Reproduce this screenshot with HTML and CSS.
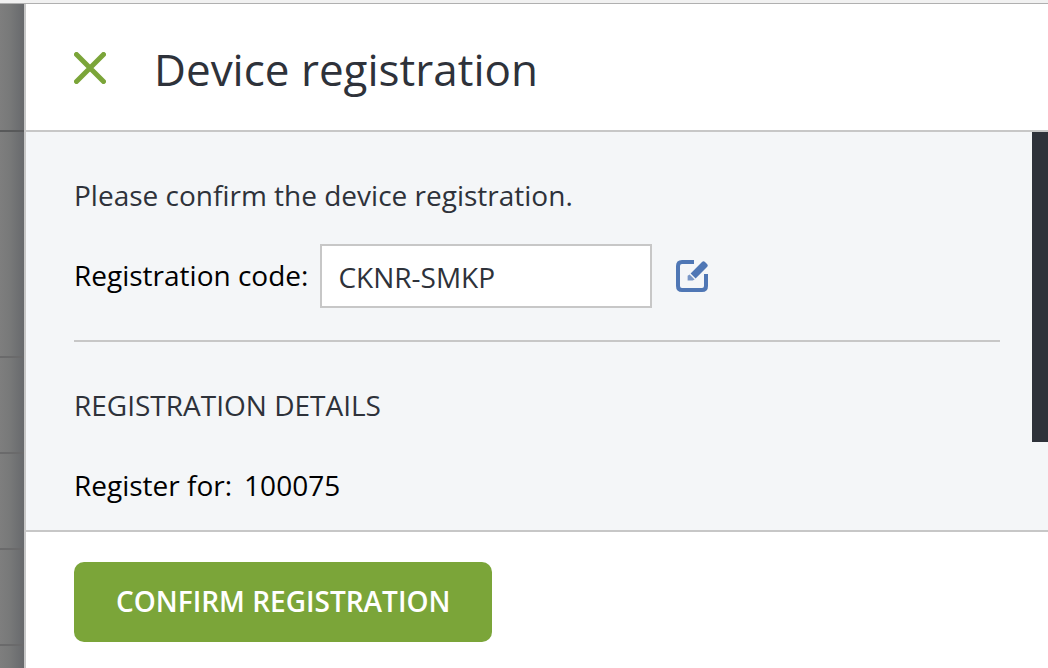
FILE: index.html
```
<!doctype html>
<html lang="en">
    <head>
        <meta charset="utf-8">
        <title>Device registration</title>
        <link rel="stylesheet" href="styles.css">
    </head>
    <body>
        <div class="topbar"></div>
        <div class="page">
            <!-- dimmed list behind the dialog -->
            <div class="backdrop">
                <div class="row row-head"></div>
                <div class="row row-filter"></div>
                <div class="row"></div>
                <div class="row"></div>
                <div class="row"></div>
            </div>

            <form class="dialog">
                <header class="dialog-header">
                    <button type="button" class="icon-btn" aria-label="Close">
                        <svg width="32" height="32" viewBox="0 0 32 32" fill="none" stroke="#7ba539" stroke-width="5" stroke-linecap="round">
                            <path d="M2.5 2.5L29.5 29.5M29.5 2.5L2.5 29.5"/>
                        </svg>
                    </button>
                    <h1>Device registration</h1>
                </header>

                <div class="dialog-body">
                    <div class="content">
                        <p class="intro">Please confirm the device registration.</p>
                        <div class="field">
                            <label for="code">Registration code:</label>
                            <input id="code" type="text" value="CKNR-SMKP">
                            <button type="button" class="icon-btn" aria-label="Edit code">
                                <svg width="32" height="32" viewBox="0 0 32 32">
                                    <path d="M18 2H6Q2 2 2 6V26Q2 30 6 30H26Q30 30 30 26V14" fill="none" stroke="#4f77b5" stroke-width="4"/>
                                    <path d="M14.6 13.4L26 2Q27.5 0.5 29 2L31 4Q32.5 5.5 31 7L19.6 18.4Z" fill="#4f77b5"/>
                                    <path d="M11.6 20.6V15.8L13.6 14.4L18.6 19.4L16.6 20.6Z" fill="#7896c6"/>
                                </svg>
                            </button>
                        </div>
                        <hr>
                        <h2>REGISTRATION DETAILS</h2>
                        <dl class="details">
                            <dt>Register for:</dt>
                            <dd>100075</dd>
                        </dl>
                    </div>
                    <div class="scrollbar"><div class="thumb"></div></div>
                </div>

                <footer class="dialog-footer">
                    <button type="submit" class="btn">CONFIRM REGISTRATION</button>
                </footer>
            </form>
        </div>
    </body>
</html>
```

FILE: styles.css
```
* {
    box-sizing: border-box;
    font-family: "Open Sans", sans-serif;
}

body {
    display: flex;
    flex-direction: column;
    height: 100vh;
    margin: 0;
    overflow: hidden;
    font-size: 28px;
    line-height: 38px;
    color: #2e323a;
}

.topbar {
    flex: none;
    height: 4px;
    background: #f1f1f1;
    border-bottom: 1px solid #b0b0b0;
}

.page {
    display: flex;
    flex: 1;
    min-height: 0;
}

.backdrop {
    flex: none;
    width: 24px;
    overflow: hidden;
    background: linear-gradient(to right, #7e7e7e, #787979 40%, #67696c);
}

.row {
    height: 96px;
    border-bottom: 2px solid #6a6a6b;
}

.row-head {
    height: 128px;
    border-color: #58595a;
}

.row-filter {
    height: 226px;
}

.dialog {
    display: flex;
    flex: 1;
    flex-direction: column;
    min-width: 0;
    background: #fff;
    border-left: 2px solid #c7c7c7;
}

.dialog-header {
    display: flex;
    align-items: center;
    gap: 48px;
    padding: 32px 48px 30px;
    border-bottom: 2px solid #c7c7c7;
}

h1 {
    margin: 0;
    padding-top: 2px;
    font-size: 44px;
    font-weight: 400;
    line-height: 62px;
}

.icon-btn {
    flex: none;
    padding: 0;
    border: 0;
    background: none;
    line-height: 0;
    cursor: pointer;
}

.dialog-body {
    display: flex;
    flex: 1;
    min-height: 0;
    background: #f4f6f8;
}

.content {
    flex: 1;
    padding: 44px 32px 24px 48px;
    overflow: hidden;
}

.intro {
    margin: 0 0 30px;
}

.field {
    display: flex;
    align-items: center;
    color: #000;
}

.field label {
    padding-bottom: 2px;
}

.field input {
    width: 332px;
    height: 64px;
    margin: 0 24px 0 12px;
    padding: 2px 16px 0;
    border: 2px solid #c7c7c7;
    background: #fff;
    color: #2e323a;
    font-size: 28px;
}

hr {
    margin: 32px 0 44px;
    border: 0;
    border-top: 2px solid #c7c7c7;
}

h2 {
    margin: 0 0 42px;
    font-size: 28px;
    font-weight: 400;
}

.details {
    display: flex;
    gap: 12px;
    margin: 0;
    color: #000;
}

.details dd {
    margin: 0;
}

.scrollbar {
    flex: none;
    width: 16px;
}

.thumb {
    height: 78%;
    background: #2e323a;
}

.dialog-footer {
    padding: 30px 48px 26px;
    border-top: 2px solid #c7c7c7;
}

.btn {
    display: block;
    height: 80px;
    padding: 0 42px 2px;
    border: 0;
    border-radius: 10px;
    background: #7ba539;
    color: #fff;
    font-size: 28px;
    font-weight: 600;
    cursor: pointer;
}
```
